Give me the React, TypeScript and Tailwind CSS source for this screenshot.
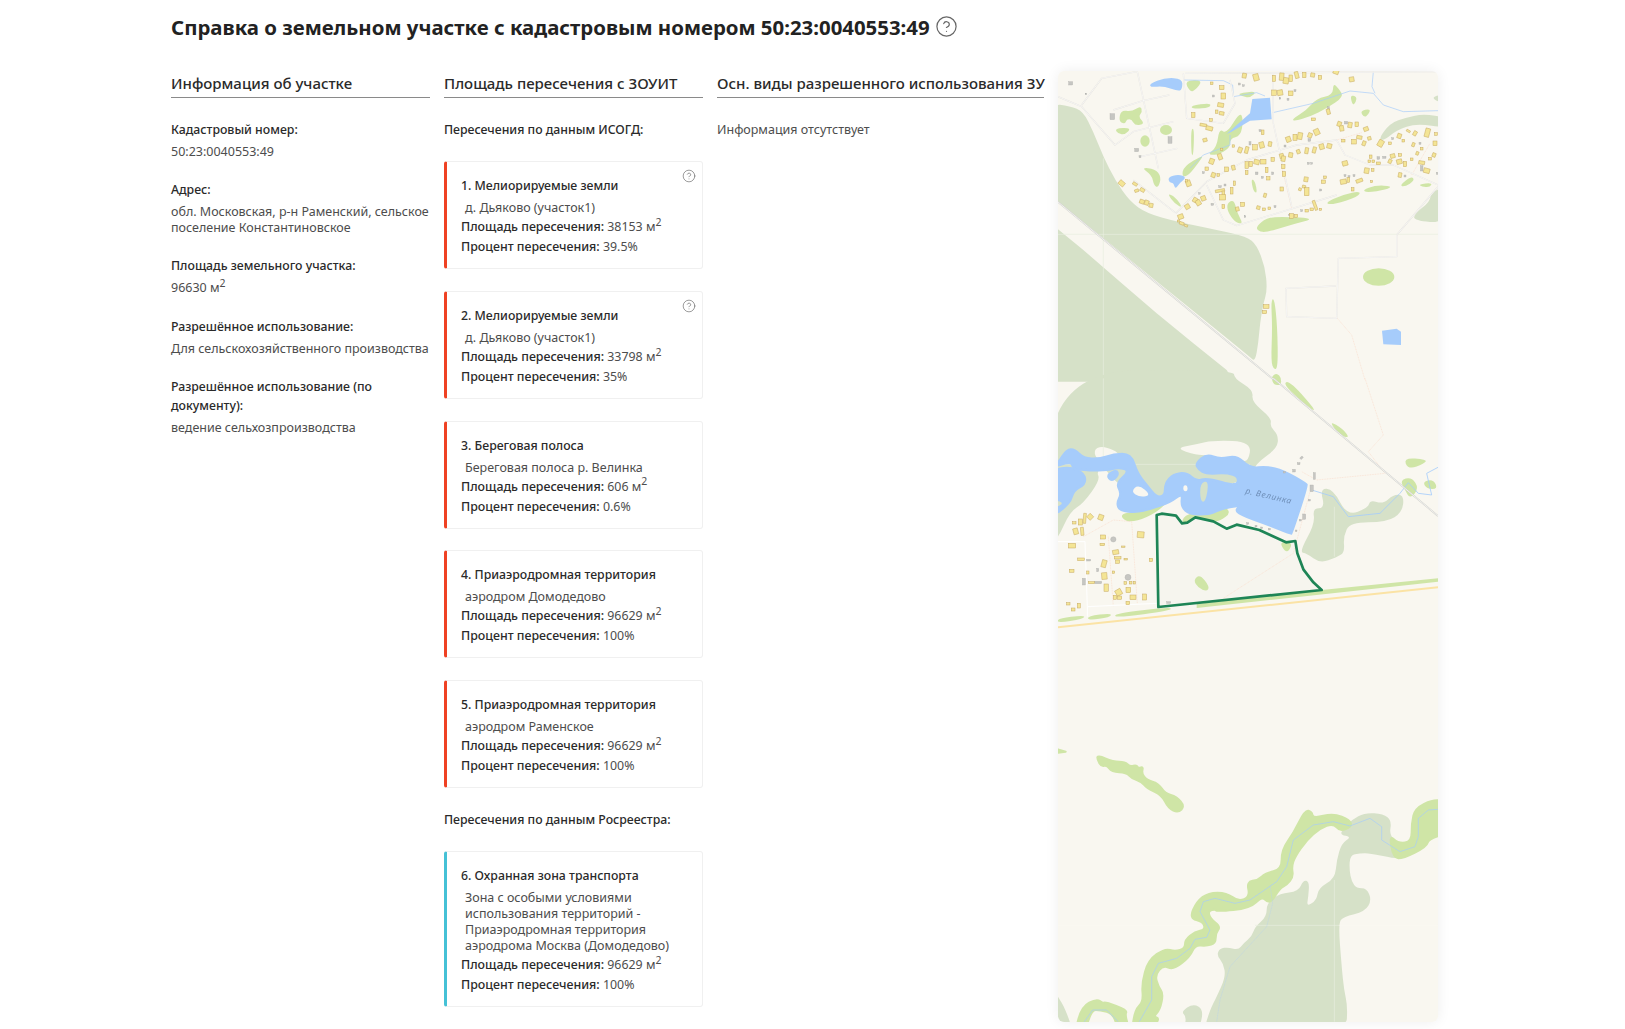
import React from "react";
import { CircleHelp } from "lucide-react";

const FOREST = "#d6e1c8", MEADOW = "#cfe5a6", WATER = "#a6ccfb", BG = "#f9f7f0";

// Rounds a closed "M x y L x y ... Z" outline through its edge midpoints, for organic map shapes.
const smooth = (d: string) => {
  const n = (d.match(/-?\d+(\.\d+)?/g) || []).map(Number);
  const p: number[][] = [];
  for (let i = 0; i + 1 < n.length; i += 2) p.push([n[i], n[i + 1]]);
  const mid = (a: number[], b: number[]) => [(a[0] + b[0]) / 2, (a[1] + b[1]) / 2];
  const start = mid(p[p.length - 1], p[0]);
  let out = `M${start[0]} ${start[1]}`;
  p.forEach((c, i) => {
    const m = mid(c, p[(i + 1) % p.length]);
    out += `Q${c[0]} ${c[1]} ${m[0]} ${m[1]}`;
  });
  return out + "Z";
};

const Blob = ({ d, fill }: { d: string; fill?: string }) => <path d={smooth(d)} fill={fill} />;

// [x, y, w, h, rotation]: building footprints, in crop pixels of the top map section
const houses: number[][] = [
  [583,47,12,14,10],[618,52,16,20,-15],[672,55,9,18,0],[695,50,13,22,5],[708,62,16,18,10],[722,55,10,20,0],[740,45,11,20,-15],[763,45,10,16,0],[788,45,12,12,10],[810,52,10,12,0],[858,35,16,14,20],[905,58,14,14,-10],
  [485,70,8,8,0],[515,83,14,12,0],[520,108,14,18,0],[512,135,18,12,10],[500,155,8,10,0],[515,160,14,10,10],[430,165,10,15,0],[483,180,8,8,0],[460,195,20,8,10],[478,205,20,12,15],[465,240,12,10,-15],[550,258,7,7,0],
  [672,98,14,16,0],[690,98,16,16,-10],[722,100,14,14,0],[835,155,10,16,-15],[790,178,12,8,0],[868,192,12,14,20],[875,205,12,16,-10],[900,195,12,16,10],[920,193,10,14,0],[948,207,14,12,-20],[638,217,8,14,0],[800,216,16,18,-25],[780,226,12,14,20],
  [715,238,14,16,-20],[735,232,12,18,0],[750,228,14,20,10],[515,268,7,7,0],[570,270,12,16,20],[590,270,10,20,15],[615,262,14,16,0],[635,255,14,18,-15],[660,252,10,14,10],[695,288,12,14,-15],[722,285,12,14,10],[745,275,10,12,-20],[770,272,10,18,10],[793,270,10,18,15],[815,260,14,16,-15],[838,258,14,14,15],
  [510,290,12,18,-20],[485,304,14,16,20],[470,326,10,10,0],[490,345,12,14,20],[505,345,8,8,0],[530,328,12,14,0],[550,323,10,14,-15],[590,315,10,20,0],[602,312,10,16,0],[620,306,16,14,15],[640,305,16,14,0],[668,298,10,12,0],[700,296,12,16,10],[590,338,8,12,0],[650,330,8,16,0],[655,355,10,10,0],[700,320,10,12,0],[702,342,10,14,0],[553,370,6,14,0],[415,370,14,18,-20],[410,362,6,8,0],
  [215,370,18,14,40],[255,372,14,8,30],[260,392,12,8,-20],[277,390,14,10,30],[276,425,14,12,20],[290,428,12,14,20],[303,436,12,12,10],[392,470,16,14,-20],[385,483,6,6,0],[395,490,14,8,20],[408,497,10,6,20],
  [412,440,14,14,-30],[435,420,12,14,30],[445,428,14,16,-30],[460,415,14,14,-20],[510,392,28,8,-10],[520,400,8,14,0],[518,412,18,16,0],[545,392,8,20,0],[520,440,8,12,0],[562,447,10,12,-15],[578,433,12,12,0],[625,443,10,10,15],[642,448,8,8,0],[658,445,8,8,0],[645,406,8,12,15],[695,387,10,12,0],[768,358,12,14,10],[750,388,8,8,20],[762,380,10,8,15],[770,395,14,24,0],[825,352,8,8,0],[820,365,12,10,0],[725,468,12,14,0],[738,468,10,10,0],[770,452,10,8,0],[785,448,10,8,0],[795,436,8,30,-20],[812,448,6,6,0],
  [880,242,10,8,0],[912,245,14,14,0],[928,232,16,10,10],[942,250,10,14,20],[958,235,10,10,-15],[992,250,16,20,30],[1020,250,8,8,0],[1048,228,12,14,20],[1060,242,8,8,0],[1075,213,12,6,30],[1095,220,10,14,30],[1132,218,14,26,15],[1158,222,8,8,0],[1155,250,12,14,0],[1090,254,8,12,20],[1115,266,8,8,0],[1102,280,8,10,20],[1085,298,8,8,0],[1152,285,10,12,20],[1140,296,8,8,0],
  [962,290,8,10,0],[958,304,8,8,0],[970,304,8,8,0],[985,310,12,8,0],[1028,288,14,12,-15],[1020,304,10,12,25],[1050,285,10,8,0],[1048,305,16,14,-15],[1065,312,10,16,0],[1115,308,18,10,10],[1130,332,18,14,15],[885,310,16,14,-15],[950,332,14,16,10],[968,330,8,8,0],[928,362,20,10,-20],[880,365,18,14,-10],[895,360,8,14,0],[908,388,8,10,0],[1050,345,10,14,10],[965,365,6,6,0],
];

const lowerHouses: number[][] = [
  [68,425,10,7,0],[85,417,12,18,0],[100,400,8,30,5],[113,403,15,15,45],[145,404,15,16,20],[70,445,14,18,-15],[92,442,9,24,-5],[152,465,15,12,0],[262,455,20,18,5],[55,490,22,14,0],[150,490,14,7,0],[188,510,18,13,-10],[193,530,20,7,0],[197,540,12,10,0],[215,498,10,4,0],[222,535,10,5,0],[83,534,20,8,0],[155,540,14,22,15],[298,535,10,10,0],[58,568,14,9,0],[110,573,7,9,0],[187,573,7,7,0],[155,578,16,20,-5],[115,605,18,6,0],[162,612,13,22,0],[222,605,8,8,0],[238,604,8,8,0],[250,604,6,8,0],[228,622,14,16,0],[197,628,18,18,-30],[240,645,18,14,0],[190,646,10,12,0],[202,648,13,10,0],[278,642,12,18,0],[228,664,11,10,0],[82,670,9,14,0],[50,668,10,7,0],[64,684,11,9,0],
];

const grays: number[][] = [
  [62,70,12,10],[187,170,14,18],[260,270,12,10],[360,240,12,20],[568,72,6,6],[580,77,6,5],[490,108,6,6],[735,92,6,6],[714,118,6,6],[690,115,5,5],[835,145,6,10],[888,188,10,8],[630,212,6,6],[600,250,6,10],[778,240,8,8],[705,258,6,6],[775,310,6,6],[785,310,5,5],[510,380,8,6],[525,375,6,6],[620,340,8,8],[637,352,6,6],[668,340,6,8],[812,390,6,6],[885,347,6,6],[897,350,6,6],[912,347,6,6],[985,294,8,8],[1003,292,10,6],[1065,348,6,6],[1115,325,8,16],[1162,340,6,6],[1028,236,6,6],[1110,250,6,6],[460,338,6,6],[448,400,5,5],[487,433,8,6],[585,470,5,5],[675,440,6,6],[755,452,6,6],[718,465,4,4],[108,102,5,5],[270,290,6,6],
];

const villageRoads = [
  "M24 110 L95 140 L195 255 L250 215 L370 185",
  "M95 135 L155 55 L260 35",
  "M190 150 L280 122 L358 105",
  "M262 35 L325 325",
  "M272 290 L382 265",
  "M400 40 L410 175 L520 190 L555 130 L540 60",
  "M405 40 L1165 35",
  "M668 40 L670 190 L725 440",
  "M378 460 L470 365 L590 300 L740 255 L860 240 L885 285 L960 315 L1030 315 L1164 375",
  "M470 375 L520 480 L560 497 L680 460 L860 405",
  "M378 460 L250 360",
  "M1040 525 L1040 590 L865 595 L860 775 L710 770 L708 685 L858 678",
  "M1040 525 L1164 380",
];

const Section = ({ label, value }: { label: string; value: React.ReactNode }) => (
  <div className="mb-5">
    <div className="mb-[5px] text-[12.3px] leading-[19px] font-medium text-[#2a2a2a]">{label}</div>
    <div className="text-[12.5px] leading-4 text-[#4d4d4d]">{value}</div>
  </div>
);

const Sq = () => <sup className="text-[10.5px] leading-none">2</sup>;

type CardProps = { title: string; sub: React.ReactNode; area: string; pct: string; help?: boolean; accent: "red" | "cyan" };

const Card = ({ title, sub, area, pct, help, accent }: CardProps) => (
  <div className={`relative mb-[21.75px] rounded-[3px] border border-[#f0f0f0] border-l-[3px] pt-[14px] pb-[12px] pl-[14px] pr-2 ${accent === "red" ? "border-l-[#ef4123]" : "border-l-[#45c1d6]"}`}>
    {help && <CircleHelp className="absolute right-[6px] top-[7px] h-[14px] w-[14px] text-[#555]" strokeWidth={1} />}
    <div className="text-[12.3px] leading-[19px] font-medium text-[#2a2a2a]">{title}</div>
    <div className="mt-[5px] pl-1 text-[12.5px] leading-4 text-[#4d4d4d]">{sub}</div>
    <div className="mt-[1px] text-[12.4px] leading-[19px] text-[#4d4d4d]"><span className="font-medium text-[#2a2a2a]">Площадь пересечения:</span> {area} м<Sq /></div>
    <div className="mt-[1px] text-[12.4px] leading-[19px] text-[#4d4d4d]"><span className="font-medium text-[#2a2a2a]">Процент пересечения:</span> {pct}</div>
  </div>
);

const ColHead = ({ children }: { children: React.ReactNode }) => (
  <h2 className="mb-[22px] h-[27px] border-b border-[#8a8a8a] text-[15px] leading-[25px] font-medium text-[#2a2a2a] whitespace-nowrap">{children}</h2>
);

const MapArt = () => (
  <svg viewBox="1058 71 380 951" className="block h-full w-full blur-[0.35px]" xmlns="http://www.w3.org/2000/svg">
    <rect x="1058" y="71" width="380" height="951" fill={BG} />

    {/* upper section */}
    <g transform="translate(1050 60) scale(0.33333)">
      <Blob fill={FOREST} d="M0 130 L60 138 L100 155 L130 215 L160 290 L195 360 L240 425 L290 460 L380 485 L500 510 L590 530 L620 555 L645 620 L652 690 L640 730 L630 790 L625 850 L615 905 L600 890 L24 425 L0 405 Z" />
      <path fill={FOREST} d="M24 508 L100 570 L210 665 L320 760 L430 850 L530 930 L552 965 L24 965 Z" />
      <Blob fill={FOREST} d="M985 238 L1020 190 L1070 172 L1120 162 L1190 172 L1190 205 L1100 190 L1040 210 L1005 240 Z" />
      <Blob fill={FOREST} d="M1090 482 L1095 460 L1140 425 L1143 395 L1190 380 L1190 490 Z" />
      <Blob fill={FOREST} d="M1138 113 L1190 100 L1190 135 Z" />
      <path stroke="#e8eedf" strokeWidth="2" fill="none" d="M160 295 V965 M24 523 H1164" />

      <g fill={MEADOW}>
        <Blob d="M725 178 L770 150 L800 115 L848 105 L850 70 L865 85 L882 110 L830 145 L780 170 L735 183 Z" />
        <Blob d="M900 105 L920 110 L918 125 L908 137 Z" />
        <Blob d="M930 153 L962 146 L955 165 L942 172 Z" />
        <Blob d="M403 62 L460 60 L435 92 L420 95 Z" />
        <Blob d="M563 100 L622 93 L600 114 L575 108 Z" />
        <Blob d="M421 138 L482 128 L480 143 L430 147 Z" />
        <Blob d="M530 222 L570 155 L580 180 L572 228 L540 235 L540 265 L500 285 L472 284 L500 262 L508 205 Z" />
        <Blob d="M423 206 L433 206 L430 287 L424 284 Z" />
        <Blob d="M396 350 L400 320 L462 283 L448 305 L415 347 Z" />
        <Blob d="M213 150 L245 155 L272 137 L277 155 L265 170 L285 192 L255 197 L245 178 L230 178 L225 192 L206 185 Z" />
        <Blob d="M193 205 L245 203 L225 224 L205 222 Z" />
        <ellipse cx="348" cy="210" rx="18" ry="15" />
        <ellipse cx="285" cy="243" rx="14" ry="17" />
        <Blob d="M273 323 L315 326 L334 350 L325 383 L312 377 L305 345 Z" />
        <Blob d="M351 400 L375 410 L399 444 L375 432 Z" />
        <Blob d="M603 356 L615 363 L622 400 L610 394 Z" />
        <Blob d="M531 430 L552 418 L562 460 L580 492 L555 487 L533 455 Z" />
        <Blob d="M618 500 L650 473 L700 470 L797 475 L730 492 L650 517 L625 514 Z" />
        <Blob d="M823 430 L880 403 L932 393 L925 410 L850 434 Z" />
        <Blob d="M938 390 L975 376 L1027 378 L1010 389 L950 398 Z" />
        <Blob d="M1048 377 L1085 348 L1094 362 L1065 380 Z" />
        <Blob d="M1106 373 L1147 368 L1140 382 L1115 380 Z" />
        <ellipse cx="986" cy="651" rx="47" ry="26" />
        <Blob d="M663 722 L673 714 L682 800 L684 922 L672 930 L663 905 L667 800 Z" />
        <Blob d="M663 952 L680 938 L695 955 L692 975 L672 975 Z" />
      </g>

      <g fill={WATER}>
        <Blob d="M298 72 L345 53 L397 56 L397 85 L387 95 L340 78 L303 82 Z" />
        <path d="M530 222 L600 160 L607 117 L660 113 L665 178 L600 182 L545 215 Z" />
        <Blob d="M354 352 L385 343 L410 352 L390 368 L376 388 L370 368 L358 368 Z" />
        <path d="M996 812 L1040 806 L1053 815 L1053 855 L1000 853 Z" />
      </g>

      <g fill="none" stroke="#a6ccfb" strokeWidth="2">
        <path d="M400 60 L520 62 L548 75 L550 110 L620 98 L645 108" />
        <path d="M668 158 L790 130 L900 93 L970 100 L1000 135 L1060 155 L1164 152" />
        <path d="M970 35 L966 80 L975 100" />
        <path d="M540 225 L540 255 L460 285 L420 325" />
      </g>

      <g fill="none" stroke="#fbdccb" strokeWidth="2" strokeDasharray="3 2">
        <path d="M695 320 L725 445" />
        <path d="M862 775 L905 825 L945 960" />
        <path d="M860 240 L935 218" />
        <path d="M1085 345 L1140 250" />
      </g>

      <g fill="none" stroke="#e3e1dc" strokeWidth="4" strokeLinejoin="round">
        {villageRoads.map((d) => <path key={d} d={d} />)}
      </g>
      <g fill="none" stroke="#ffffff" strokeWidth="2" strokeLinejoin="round">
        {villageRoads.map((d) => <path key={d} d={d} />)}
      </g>
      <path d="M24 426 L670 958" stroke="#d2d2cd" strokeWidth="5" fill="none" />
      <path d="M24 426 L670 958" stroke="#ffffff" strokeWidth="2" fill="none" />

      <g fill="#c6c6c2" stroke="#ababa8" strokeWidth="1">
        {grays.map(([x, y, w, h], i) => <rect key={i} x={x - w / 2} y={y - h / 2} width={w} height={h} />)}
      </g>
      <g fill="#f4e595" stroke="#c7aa62" strokeWidth="1.5">
        {houses.map(([x, y, w, h, r], i) => (
          <rect key={i} x={x - w / 2} y={y - h / 2} width={w} height={h} transform={`rotate(${r} ${x} ${y})`} />
        ))}
        <rect x="640" y="734" width="17" height="11" />
        <rect x="637" y="752" width="13" height="9" />
      </g>
    </g>

    {/* middle section */}
    <g transform="translate(1050 380) scale(0.33333)">
      <Blob fill={FOREST} d="M0 -30 L552 -30 L552 -5 L610 30 L605 65 L665 115 L660 140 L685 165 L682 205 L615 252 L600 300 L400 345 L330 355 L250 335 L200 310 L160 260 L140 275 L150 300 L100 370 L60 395 L24 475 L0 490 Z" />
      <Blob fill={BG} d="M133 205 L165 198 L218 225 L160 240 L136 234 Z" />
      <Blob fill={BG} d="M376 205 L440 193 L490 181 L605 185 L594 250 L560 232 L510 238 L470 225 L440 225 Z" />
      <Blob fill={FOREST} d="M810 325 L850 328 L892 408 L955 383 L960 360 L1000 372 L1030 343 L1062 345 L1057 397 L1010 427 L900 427 L880 470 L884 517 L860 532 L810 550 L770 520 L748 517 L795 430 L788 385 L825 385 Z" />
      <path stroke="#e8eedf" strokeWidth="2" fill="none" d="M160 -5 V250 M24 253 H600 M853 380 V530" />

      <g fill={MEADOW}>
        <Blob d="M210 402 L260 395 L335 375 L358 360 L320 398 L260 424 L225 424 Z" />
        <Blob d="M393 425 L410 402 L500 383 L525 378 L542 400 L510 422 L490 426 L436 414 L412 430 Z" />
        <Blob d="M698 10 L720 3 L807 102 L760 70 Z" />
        <Blob d="M836 121 L880 148 L899 174 L870 167 Z" />
        <Blob d="M1060 233 L1130 238 L1125 250 L1075 269 Z" />
        <Blob d="M1050 300 L1085 291 L1107 325 L1080 357 L1065 330 Z" />
        <Blob d="M1118 305 L1150 298 L1164 327 L1130 327 Z" />
        <Blob d="M1158 228 L1190 220 L1190 252 Z" />
        <path d="M440 672 L815 630 L1164 595 L1164 605 L800 645 L440 684 Z" />
        <Blob d="M22 716 L105 705 L100 717 L22 729 Z" />
        <Blob d="M113 708 L185 699 L180 712 L115 721 Z" />
        <Blob d="M193 700 L362 681 L364 691 L198 714 Z" />
      </g>

      <g fill={WATER} stroke={WATER} strokeWidth="7" strokeLinejoin="round">
        <Blob d="M0 262 L24 250 L50 208 L75 208 L100 235 L150 237 L190 222 L243 222 L262 280 L290 315 L320 352 L345 347 L345 310 L370 282 L410 278 L440 305 L470 293 L560 320 L567 290 L530 278 L470 282 L445 268 L437 250 L470 222 L510 238 L560 226 L600 265 L650 260 L700 272 L770 312 L770 315 L772 316 L725 460 L722 462 L650 432 L570 404 L556 388 L580 376 L540 380 L500 392 L480 402 L420 404 L393 380 L398 338 L360 367 L300 387 L260 397 L210 392 L200 370 L215 340 L198 310 L240 272 L205 262 L170 272 L100 270 L68 264 L65 245 Z" />
        <Blob d="M0 272 L60 260 L103 280 L107 312 L70 332 L60 370 L0 415 Z" />
        <Blob d="M170 285 L200 270 L205 285 L185 304 Z" />
      </g>
      <Blob fill={FOREST} d="M450 310 L477 301 L467 367 L451 364 Z" />
      <Blob fill={FOREST} d="M10 358 L44 370 L10 384 Z" />
      <Blob fill={BG} d="M243 335 L265 313 L304 345 L270 352 Z" />
      <Blob fill={BG} d="M400 316 L412 316 L413 334 L400 334 Z" />
      <path fill="none" stroke="#a6ccfb" strokeWidth="2.5" strokeLinejoin="round" d="M785 330 L850 350 L895 410 L990 400 L1050 340 L1075 308 L1105 340 L1145 345 L1130 280 L1164 262" />

      <path fill="#f6f5ee" d="M320 405 L335 401 L378 407 L396 430 L412 428 L436 412 L490 424 L530 446 L560 434 L628 450 L708 487 L736 483 L742 520 L760 568 L790 607 L815 630 L325 681 Z" />
      <Blob fill={MEADOW} d="M430 600 L450 583 L479 620 L470 635 L445 624 Z" />
      <Blob fill={MEADOW} d="M688 485 L727 487 L718 512 L705 515 Z" />

      <g fill="none" stroke="#fbdccb" strokeWidth="2" strokeDasharray="3 2">
        <path d="M945 -5 L1000 165 L955 215 L1005 280 L800 300 L755 275" />
        <path d="M780 335 L730 520 L520 655" />
        <path d="M100 470 L190 420 L245 425 L262 670" />
        <path d="M175 470 L190 680" />
      </g>
      <path d="M24 742 L1164 622" stroke="#fbe3a5" strokeWidth="6" fill="none" />
      <path d="M670 -5 L1164 408" stroke="#d2d2cd" strokeWidth="5" fill="none" />
      <path d="M670 -5 L1164 408" stroke="#ffffff" strokeWidth="2" fill="none" />
      <path d="M24 485 H105 L112 680 L320 670 M112 680 L112 710" stroke="#ffffff" strokeWidth="3" fill="none" />

      <g fill="#c6c6c2" stroke="#ababa8" strokeWidth="1">
        <circle cx="190" cy="478" r="8" />
        <circle cx="234" cy="592" r="9" />
        <rect x="97" y="595" width="9" height="20" />
        <rect x="133" y="604" width="22" height="7" />
        <rect x="110" y="538" width="12" height="5" />
        <rect x="140" y="565" width="6" height="10" />
        <rect x="790" y="278" width="6" height="20" />
        <rect x="780" y="315" width="10" height="20" />
        <rect x="758" y="402" width="9" height="16" />
        <rect x="750" y="230" width="9" height="6" transform="rotate(-40 755 233)" />
        <rect x="742" y="248" width="8" height="6" />
        <rect x="728" y="268" width="8" height="8" />
        <rect x="700" y="274" width="6" height="5" />
        <rect x="590" y="428" width="6" height="5" />
        <rect x="615" y="436" width="6" height="5" />
        <rect x="632" y="441" width="6" height="5" />
        <rect x="655" y="445" width="6" height="5" />
        <rect x="775" y="358" width="6" height="5" />
        <rect x="748" y="418" width="6" height="5" />
        <rect x="736" y="450" width="5" height="5" />
        <rect x="350" y="665" width="12" height="5" />
      </g>
      <g fill="#f4e595" stroke="#c7aa62" strokeWidth="1.5">
        {lowerHouses.map(([x, y, w, h, r], i) => (
          <rect key={i} x={x} y={y} width={w} height={h} transform={`rotate(${r} ${x + w / 2} ${y + h / 2})`} />
        ))}
      </g>
      <text x="585" y="340" fontSize="25" fontStyle="italic" fill="#6f8fb8" letterSpacing="2" fontFamily="'Noto Sans', sans-serif" transform="rotate(13 585 340)">р. Велинка</text>
      <path fill="none" stroke="#1e8556" strokeWidth="8" strokeLinejoin="round" d="M320 405 L335 401 L378 407 L396 430 L412 428 L436 412 L490 424 L530 446 L560 434 L628 450 L708 487 L736 483 L742 520 L760 568 L790 607 L815 630 L325 681 Z" />
    </g>

    {/* lower section */}
    <g transform="translate(1050 700) scale(0.33333)">
      <Blob fill={FOREST} d="M460 995 L480 930 L500 890 L527 830 L520 790 L500 765 L510 745 L535 742 L565 750 L580 730 L605 710 L615 680 L650 650 L650 610 L690 580 L745 575 L760 540 L778 545 L775 590 L770 620 L800 600 L805 565 L855 535 L860 480 L875 430 L905 410 L870 405 L880 385 L905 360 L945 338 L1000 342 L1025 362 L1018 405 L1045 430 L1060 475 L1030 475 L960 460 L930 460 L900 465 L898 510 L905 545 L920 565 L950 565 L965 600 L945 635 L880 650 L865 670 L875 800 L882 870 L893 920 L888 995 Z" />
      <Blob fill={FOREST} d="M0 850 L24 890 L45 925 L70 995 L0 995 Z" />
      <Blob fill={FOREST} d="M393 935 L430 910 L462 930 L445 995 L400 995 L410 950 Z" />
      <path stroke="#e8eedf" strokeWidth="2" fill="none" d="M853 540 V965 M615 676 H865" />
      <path stroke="#fbf9f3" strokeWidth="1.5" fill="none" d="M24 676 H615 M865 676 H1164" />
      <g fill={MEADOW} stroke={MEADOW} strokeWidth="6" strokeLinejoin="round">
        <Blob d="M245 995 L255 930 L280 905 L275 850 L295 780 L345 745 L375 755 L405 745 L405 720 L435 695 L465 690 L460 665 L418 655 L440 605 L475 578 L530 578 L565 605 L600 590 L590 545 L625 540 L645 520 L695 508 L695 450 L730 400 L765 330 L785 335 L790 355 L850 340 L900 360 L905 380 L870 395 L850 370 L810 385 L770 420 L735 470 L725 500 L730 530 L710 555 L690 565 L665 605 L650 605 L635 590 L600 625 L500 635 L497 628 L475 632 L480 655 L512 680 L497 700 L497 730 L470 738 L435 735 L420 770 L370 810 L340 795 L315 825 L325 860 L340 880 L330 930 L310 950 L330 955 L300 995 Z" />
        <Blob d="M1018 405 L1045 430 L1085 425 L1085 370 L1095 325 L1150 298 L1190 305 L1190 400 L1135 418 L1130 440 L1060 475 L1030 475 Z" />
        <Blob d="M75 995 L95 920 L140 896 L160 910 L165 905 L232 930 L225 945 L240 995 L205 995 L190 940 L150 930 L125 930 L105 995 Z" />
        <Blob d="M142 165 L190 185 L225 185 L240 200 L260 195 L265 205 L280 200 L275 220 L290 240 L325 250 L345 280 L380 290 L404 318 L385 339 L355 325 L335 285 L290 265 L275 245 L245 235 L230 218 L185 215 L170 195 L155 200 L142 180 Z" />
        <path d="M24 148 L47 155 L24 158 Z" />
      </g>
      <path fill="none" stroke="#a6ccfb" strokeWidth="2" strokeLinejoin="round" d="M268 965 L305 900 L305 830 L325 790 L380 775 L420 745 L435 718 L470 712 L480 690 L450 635 L460 605 L495 595 L555 610 L600 600 L680 545 L710 500 L730 420 L790 375 L850 365 L900 378 L960 355 L995 380 L995 420 L1050 455 L1095 440 L1105 410 L1105 355 L1135 330 L1164 328" />
      <path fill="none" stroke="#a6ccfb" strokeWidth="2" d="M103 965 L128 930 L170 930 L205 965" />
      <path fill="none" stroke="#b9d3e8" strokeWidth="1.5" strokeDasharray="4 1" d="M660 555 L668 610 L650 680 L540 800 L510 900 L500 965" />
    </g>
  </svg>
);

export default function App() {
  return (
    <div className="ml-[171px] w-[1267px] bg-white text-[#2a2a2a] font-['Noto_Sans','Liberation_Sans',sans-serif]">
      <div className="flex h-[55px] items-center gap-[5px] pb-[2px]">
        <h1 className="text-[20.4px] leading-7 font-bold text-[#222]">Справка о земельном участке с кадастровым номером 50:23:0040553:49</h1>
        <CircleHelp className="h-[23px] w-[23px] text-[#666]" strokeWidth={1.25} />
      </div>
      <div className="flex h-[974px] items-start">
        <div className="flex w-[873px] gap-[14px] pt-[16px]">
          <div className="w-[259px] shrink-0">
            <ColHead>Информация об участке</ColHead>
            <Section label="Кадастровый номер:" value="50:23:0040553:49" />
            <Section label="Адрес:" value="обл. Московская, р-н Раменский, сельское поселение Константиновское" />
            <Section label="Площадь земельного участка:" value={<span className="block pb-[1px]">96630 м<Sq /></span>} />
            <Section label="Разрешённое использование:" value="Для сельскохозяйственного производства" />
            <Section label="Разрешённое использование (по документу):" value="ведение сельхозпроизводства" />
          </div>
          <div className="w-[259px] shrink-0">
            <ColHead>Площадь пересечения с ЗОУИТ</ColHead>
            <div className="mb-[22px] text-[12.3px] leading-[19px] font-medium">Пересечения по данным ИСОГД:</div>
            <Card accent="red" help title="1. Мелиорируемые земли" sub="д. Дьяково (участок1)" area="38153" pct="39.5%" />
            <Card accent="red" help title="2. Мелиорируемые земли" sub="д. Дьяково (участок1)" area="33798" pct="35%" />
            <Card accent="red" title="3. Береговая полоса" sub="Береговая полоса р. Велинка" area="606" pct="0.6%" />
            <Card accent="red" title="4. Приаэродромная территория" sub="аэродром Домодедово" area="96629" pct="100%" />
            <Card accent="red" title="5. Приаэродромная территория" sub="аэродром Раменское" area="96629" pct="100%" />
            <div className="mb-[22px] text-[12.3px] leading-[19px] font-medium">Пересечения по данным Росреестра:</div>
            <Card accent="cyan" title="6. Охранная зона транспорта" sub="Зона с особыми условиями использования территорий - Приаэродромная территория аэродрома Москва (Домодедово)" area="96629" pct="100%" />
          </div>
          <div className="w-[327px] shrink-0">
            <ColHead>Осн. виды разрешенного использования ЗУ</ColHead>
            <div className="text-[12.5px] leading-[19px] text-[#4d4d4d]">Информация отсутствует</div>
          </div>
        </div>
        <div className="ml-[14px] mt-[16px] h-[951px] w-[380px] shrink-0 overflow-hidden rounded-[6px] shadow-[0_0_14px_rgba(0,0,0,0.07)]">
          <MapArt />
        </div>
      </div>
    </div>
  );
}
